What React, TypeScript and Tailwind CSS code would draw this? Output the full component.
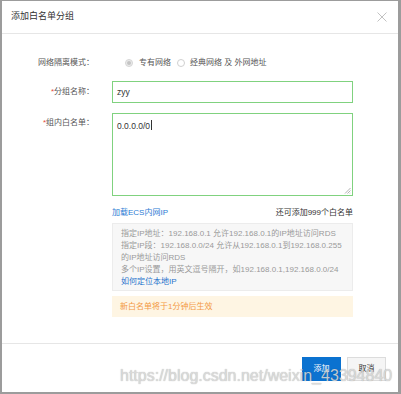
// Whitelist group dialog — "添加白名单分组"
const FONT = '[font-family:"Liberation_Sans","Noto_Sans_CJK_SC",sans-serif]';

function Radio({ checked }: { checked?: boolean }) {
  return checked ? (
    <span className="flex h-[8px] w-[8px] shrink-0 items-center justify-center rounded-full border border-[#d6d6d6] bg-[#ebebeb]">
      <span className="h-[4px] w-[4px] rounded-full bg-[#c4c4c4]" />
    </span>
  ) : (
    <span className="block h-[8px] w-[8px] shrink-0 rounded-full border border-[#d0d0d0] bg-white" />
  );
}

function Label({ text, required }: { text: string; required?: boolean }) {
  return (
    <div className="w-[92px] shrink-0 text-right text-[8px] leading-[12px] text-[#555]">
      {required && <span className="text-[#e5483c]">*</span>}
      {text}
    </div>
  );
}

export default function App() {
  return (
    <div className={`relative h-[394px] w-[401px] bg-[#9c9c9c] pb-[2px] pl-[2px] pr-[3px] pt-[1px] ${FONT}`}>
      <div className="flex h-full flex-col bg-white">
        {/* header */}
        <div className="flex h-[33px] shrink-0 items-center justify-between border-b border-[#e6e6e6] pl-[9px] pr-[11px]">
          <span className="text-[9px] text-[#333]">添加白名单分组</span>
          <svg width="10" height="10" viewBox="0 0 10 10" className="text-[#c2c2c2]">
            <path d="M0.5 0.5L9.5 9.5M9.5 0.5L0.5 9.5" stroke="currentColor" strokeWidth="1" />
          </svg>
        </div>

        {/* body */}
        <div className="flex-1 pt-[23px]">
          <div className="flex h-[12px] items-center">
            <Label text="网络隔离模式：" />
            <div className="ml-[18px] flex items-center pl-[13px] text-[8px] text-[#555]">
              <Radio checked />
              <span className="ml-[6px]">专有网络</span>
              <span className="ml-[6px] flex items-center">
                <Radio />
              </span>
              <span className="ml-[5px]">经典网络 及 外网地址</span>
            </div>
          </div>

          <div className="mt-[12px] flex items-center">
            <Label text="分组名称：" required />
            <div className="ml-[18px] flex h-[22px] w-[241px] items-center border border-[#80d27f] pl-[4px] text-[8.5px] text-[#333]">
              zyy
            </div>
          </div>

          <div className="mt-[10px] flex items-start">
            <div className="pt-[4px]">
              <Label text="组内白名单：" required />
            </div>
            <div className="relative ml-[18px] h-[83px] w-[241px] border border-[#80d27f] pl-[4px] pt-[5px] text-[8.5px] leading-[12px] text-[#333]">
              <span>0.0.0.0/0</span>
              <span className="ml-[0.5px] inline-block h-[10px] w-[1px] translate-y-[1px] bg-[#333]" />
              <svg width="7" height="7" viewBox="0 0 7 7" className="absolute bottom-[1px] right-[1px]">
                <path d="M6.5 1L1 6.5M6.5 3.5L3.5 6.5M6.5 5.8L5.8 6.5" stroke="#9e9e9e" strokeWidth="0.8" />
              </svg>
            </div>
          </div>

          <div className="ml-[110px] w-[241px]">
            <div className="mt-[11px] flex h-[12px] items-center justify-between text-[8px]">
              <span className="text-[#2b7bd4]">加载ECS内网IP</span>
              <span className="text-[#333]">还可添加999个白名单</span>
            </div>

            <div className="mt-[4px] whitespace-nowrap border border-[#ececec] bg-[#f7f7f7] pb-[2px] pl-[8px] pt-[4px] text-[8px] leading-[12px] text-[#9a9a9a]">
              <div>指定IP地址：192.168.0.1 允许192.168.0.1的IP地址访问RDS</div>
              <div>指定IP段：192.168.0.0/24 允许从192.168.0.1到192.168.0.255</div>
              <div>的IP地址访问RDS</div>
              <div>多个IP设置，用英文逗号隔开，如192.168.0.1,192.168.0.0/24</div>
              <div className="text-[#1f72cc]">如何定位本地IP</div>
            </div>

            <div className="mt-[5px] flex h-[21px] items-center bg-[#fef5e3] pl-[8px] text-[8px] text-[#f39a44]">
              新白名单将于1分钟后生效
            </div>
          </div>
        </div>

        {/* footer */}
        <div className="flex h-[49px] shrink-0 justify-end gap-[6px] border-t border-[#e6e6e6] pr-[12px] pt-[13px]">
          <button className="flex h-[24px] w-[39px] items-center justify-center bg-[#0b72d0] text-[8px] text-white">
            添加
          </button>
          <button className="flex h-[24px] w-[39px] items-center justify-center border border-[#dcdcdc] bg-[#f5f5f5] text-[8px] text-[#333]">
            取消
          </button>
        </div>
      </div>

      {/* image watermark */}
      <div className="pointer-events-none absolute left-[120px] top-[366px] text-[16px] leading-[20px] text-[rgba(225,225,225,0.85)] [text-shadow:0_0_1px_rgba(0,0,0,0.35)]">
        https://blog.csdn.net/weixin_43394840
      </div>
    </div>
  );
}
